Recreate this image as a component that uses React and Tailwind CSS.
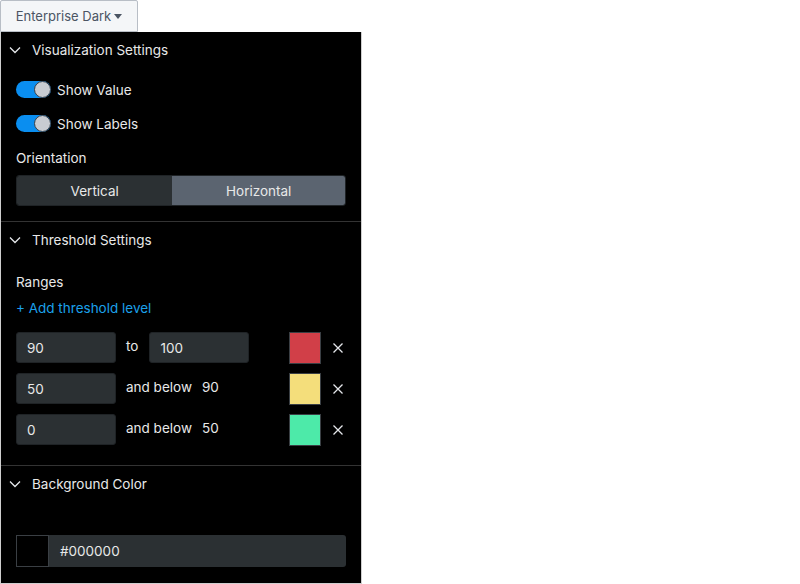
import { useState } from 'react';

const font = { fontFamily: 'Inter, "Noto Sans", sans-serif' };

const Chevron = () => (
  <svg width="12" height="12" viewBox="0 0 12 12" className="text-gray-200">
    <path d="M1 3.5l5 5 5-5" fill="none" stroke="currentColor" strokeWidth="1.3" />
  </svg>
);

const Toggle = ({ on, label }) => (
  <div className="flex items-center h-[17px]">
    <div className={`w-[35px] h-[17px] rounded-full relative ${on ? 'bg-[#0a8ef0]' : 'bg-[#444]'}`}>
      <div className="absolute right-0 top-0 w-[17px] h-[17px] rounded-full bg-[#c8ccd2] border border-[#3a4048]" />
    </div>
    <span className="ml-[6px] text-[13.5px] text-[#e8e8e8]">{label}</span>
  </div>
);

const SectionHeader = ({ title }) => (
  <div className="flex items-center h-[35px] pl-[8px]">
    <Chevron />
    <span className="ml-[11px] text-[13.5px] text-[#e8e8e8]">{title}</span>
  </div>
);

const Box = ({ value, className = '' }) => (
  <div className={`h-[31px] w-[100px] bg-[#2b3033] rounded-[3px] border border-[#1f2326] flex items-center pl-[10px] text-[13.5px] text-[#e8e8e8] ${className}`}>
    {value}
  </div>
);

const Swatch = ({ color }) => (
  <div className={`w-[32px] h-[32px] border border-[#3a3f44] ${color}`} />
);

const Close = () => (
  <svg width="12" height="12" viewBox="0 0 12 12" className="ml-[11px] text-gray-200">
    <path d="M1.5 1.5l9 9M10.5 1.5l-9 9" stroke="currentColor" strokeWidth="1.3" />
  </svg>
);

export default function App() {
  const [orientation, setOrientation] = useState('Horizontal');
  const rows = [
    { from: '90', mid: 'to', to: '100', color: 'bg-[#d13f48]', input: true },
    { from: '50', mid: 'and below', to: '90', color: 'bg-[#f4de7b]' },
    { from: '0', mid: 'and below', to: '50', color: 'bg-[#4deaa9]' },
  ];

  return (
    <div className="bg-white min-h-screen leading-5" style={font}>
      <button className="h-[32px] w-[138px] bg-[#f4f6f8] border border-[#b8bec6] rounded-t-[2px] text-[13px] text-[#4b5563] flex items-center justify-center gap-[3px]">
        Enterprise Dark
        <svg width="8" height="5" viewBox="0 0 8 5"><path d="M0 0h8L4 5z" fill="#4b5563" /></svg>
      </button>
      <div className="w-[362px] h-[552px] bg-black border border-[#cfcfcf] border-t-0">
        <div className="border-b border-[#333]">
          <SectionHeader title="Visualization Settings" />
          <div className="px-[15px] pt-[14px] pb-[15px]">
            <div className="flex flex-col gap-[17px]">
              <Toggle on label="Show Value" />
              <Toggle on label="Show Labels" />
            </div>
            <div className="mt-[16px] text-[13.5px] text-[#e8e8e8]">Orientation</div>
            <div className="mt-[7px] flex h-[31px] rounded-[3px] overflow-hidden border border-[#1f2326]">
              {['Vertical', 'Horizontal'].map(o => (
                <button
                  key={o}
                  onClick={() => setOrientation(o)}
                  className={`flex-auto text-[13.5px] text-[#e8e8e8] ${orientation === o ? 'bg-[#5b6470]' : 'bg-[#2b3033]'}`}
                >
                  {o}
                </button>
              ))}
            </div>
          </div>
        </div>
        <div className="border-b border-[#333]">
          <SectionHeader title="Threshold Settings" />
          <div className="px-[15px] pt-[15px] pb-[20px]">
            <div className="text-[13.5px] text-[#e8e8e8]">Ranges</div>
            <div className="mt-[6px] text-[13.5px] text-[#1ba0ea]">+ Add threshold level</div>
            <div className="mt-[14px] flex flex-col gap-[10px]">
              {rows.map(r => (
                <div key={r.from} className="flex items-center h-[31px]">
                  <Box value={r.from} />
                  <span className="ml-[10px] whitespace-nowrap text-[13.5px] text-[#e8e8e8] -mt-[3px]">{r.mid}</span>
                  {r.input ? (
                    <Box value={r.to} className="ml-[11px]" />
                  ) : (
                    <span className="ml-[10px] whitespace-nowrap text-[13.5px] text-[#e8e8e8] -mt-[3px]">{r.to}</span>
                  )}
                  <div className="ml-auto mr-[2px] flex items-center">
                    <Swatch color={r.color} />
                    <Close />
                  </div>
                </div>
              ))}
            </div>
          </div>
        </div>
        <div>
          <SectionHeader title="Background Color" />
          <div className="px-[15px] pt-[34px]">
            <div className="flex h-[32px]">
              <div className="w-[33px] h-[32px] bg-black border border-[#3a3f44]" />
              <div className="flex-1 bg-[#2b3033] rounded-r-[3px] flex items-center pl-[11px] text-[13.5px] text-[#e8e8e8]">#000000</div>
            </div>
          </div>
        </div>
      </div>
    </div>
  );
}
